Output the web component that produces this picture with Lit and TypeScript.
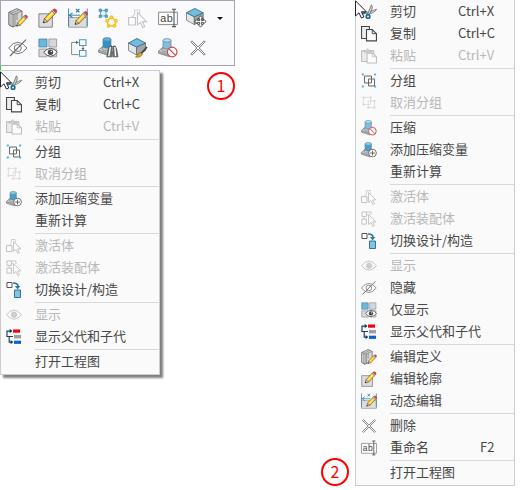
import { LitElement, html, svg, css, nothing, TemplateResult, SVGTemplateResult } from "lit";
import { customElement, property } from "lit/decorators.js";
import { classMap } from "lit/directives/class-map.js";

const pencil = (x: number, y: number, w: number) => svg`
  <g transform="translate(${x} ${y}) scale(${w / 12})">
    <path d="M0 13 L1.2 9 L4 12 Z" fill="#f3dfb8" stroke="#444" stroke-width=".7"/>
    <path d="M0 13 L.5 11.2 L1.7 12.5 Z" fill="#222"/>
    <path d="M1.2 9 L8 1.8 L10.8 4.8 L4 12 Z" fill="#fdcb30" stroke="#6b5216" stroke-width=".7"/>
    <path d="M2.6 10.2 L9 3.4" stroke="#ffee9a" stroke-width="1.2"/>
    <path d="M8 1.8 L9 .8 L11.9 3.7 L10.8 4.8 Z" fill="#ccc" stroke="#555" stroke-width=".5"/>
    <path d="M9 .8 Q10.6 -.6 12 .8 Q13.3 2.3 11.9 3.7 Z" fill="#e23f3f" stroke="#8d2a2a" stroke-width=".5"/>
  </g>`;

const cube = svg`
  <path d="M0 4.5 L8 8.5 V16.5 L0 12 Z" fill="#e4e5e7" stroke="#808184" stroke-width=".9"/>
  <path d="M17 4.5 L8 8.5 V16.5 L17 12 Z" fill="#a3a5a8" stroke="#6c6d70" stroke-width=".9"/>
  <path d="M8.5 0 L17 4.5 L8 8.5 L0 4.5 Z" fill="#74bbdd" stroke="#33718f" stroke-width=".9"/>`;

const stud = (side: string, top: string) => svg`
  <path d="M.5 13.2 L5 9.2 H14 L18.5 12.5 V14 L11 18.6 L.5 15.2 Z" fill="#a9abae" stroke="#7b7c7f" stroke-width=".8"/>
  <path d="M.5 13.2 L5 9.2 H14 L18.5 12.5 L11 16.6 Z" fill="#d6d7d9" stroke="#858689" stroke-width=".7"/>
  <ellipse cx="9" cy="11.4" rx="5.2" ry="2.6" fill="#bfc1c3" stroke="#77787b" stroke-width=".7"/>
  <path d="M5 2.4 V10 Q9 12.4 13 10 V2.4 Z" fill=${side} stroke="#4c88a8" stroke-width=".7"/>
  <ellipse cx="9" cy="2.4" rx="4" ry="1.8" fill=${top} stroke="#4c88a8" stroke-width=".7"/>`;

const pointer = svg`
  <path d="M9.5 4.5 V16.8 L12.4 14.4 L14.8 19.5 L16.8 18.5 L14.5 13.6 H18.6 Z" fill="#fff" stroke="#777" stroke-width="1.1"/>`;

const ban = svg`
  <circle cx="14.2" cy="14" r="4.8" fill="#fff" stroke="#cf4b4b" stroke-width="1.2"/>
  <path d="M10.9 10.6 L17.6 17.4" stroke="#cf4b4b" stroke-width="1.2"/>`;

const ICONS: Record<string, SVGTemplateResult> = {
  cut: svg`
    <path d="M2 11 Q9 11 19.5 6.6 Q17 11 9 12.6 Z" fill="#dfe0e2" stroke="#5c5e60" stroke-width=".9"/>
    <path d="M7.5 14.5 L13 1 Q15.4 3.5 13.2 7.5 L10 14.5 Z" fill="#d3d6d8" stroke="#5c5e60" stroke-width=".9"/>
    <circle cx="8.8" cy="15.6" r="2.3" fill="#cfe8f3" stroke="#1f6c8e" stroke-width="2"/>
    <circle cx="3" cy="10.4" r="1.9" fill="none" stroke="#1f6c8e" stroke-width="1.6"/>`,
  copy: svg`
    <path d="M.7 .7 H10.5 V15.6 H.7 Z" fill="#eceded" stroke="#444" stroke-width="1.3"/>
    <path d="M6.9 4.4 H14 L19.3 9.6 V18.6 H6.9 Z" fill="#fff" stroke="#444" stroke-width="1.4"/>
    <path d="M14 4.4 V9.6 H19.3" fill="none" stroke="#444" stroke-width="1.2"/>`,
  paste: svg`
    <path d="M.7 3.6 H16 V17 H.7 Z" fill="#d9d9d9" stroke="#777" stroke-width="1.3"/>
    <path d="M3.8 5 V3.2 H6 Q8.3 -1 10.6 3.2 H12.8 V5 Z" fill="#aaa" stroke="#666"/>
    <path d="M7.6 6.4 H14 L19.3 11 V18.8 H7.6 Z" fill="#fff" stroke="#777" stroke-width="1.3"/>
    <path d="M14 6.4 V11 H19.3" fill="none" stroke="#777"/>`,
  group: svg`
    <path d="M4.4 3.8 H13.1 V12.4 H4.4 Z" fill="#fff" stroke="#666" stroke-width="1.25"/>
    <path d="M9.4 7.5 H16.9 V16.2 H9.4 Z" fill="none" stroke="#666" stroke-width="1.25"/>
    <path d="M1 .6 h2.5 v2.5 h-2.5 Z M16.4 .6 h2.5 v2.5 h-2.5 Z M1 15.6 h2.5 v2.5 h-2.5 Z M16.4 15.6 h2.5 v2.5 h-2.5 Z" fill="#54b2dc"/>`,
  ungroup: svg`
    <path d="M3 3 H12 V12 H3 Z M9 7.5 H16.9 V15.6 H9 Z" fill="none" stroke="#bbb" stroke-width="1.25"/>
    <path d="M1.8 1.8 h2.5 v2.5 h-2.5 Z M11 1.8 h2.5 v2.5 h-2.5 Z M1.8 11 h2.5 v2.5 h-2.5 Z M15.6 6.2 h2.5 v2.5 h-2.5 Z M15.6 14.6 h2.5 v2.5 h-2.5 Z M7.8 14.6 h2.5 v2.5 h-2.5 Z" fill="#b5b5b5"/>`,
  suppress: svg`${stud("#85bddb", "#b4dcf0")}${ban}`,
  addvar: svg`${stud("#4d9dc6", "#8ecbe7")}
    <circle cx="14.4" cy="13.8" r="4.8" fill="#fff" stroke="#555"/>
    <path d="M11.4 13.8 H17.4 M14.4 10.8 V16.8" stroke="#555" stroke-width="1.1"/>`,
  body: svg`
    <path d="M.6 9.5 H7.5 V17 H.6 Z" fill="#fff" stroke="#777" stroke-width="1.2"/>
    <path d="M7.6 2 H11.6 V6 M6.6 6.6 V2 H11 M3.6 9.5 L6.6 6.6" fill="none" stroke="#999" stroke-width="1.1"/>${pointer}`,
  assembly: svg`
    <path d="M1.2 1.2 H6.8 V6.8 H1.2 Z M1.2 10 H6.8 V16.4 H1.2 Z" fill="#fff" stroke="#777" stroke-width="1.2"/>
    <path d="M6.8 1.2 H12.4 V5" fill="none" stroke="#888" stroke-width="1.2"/>
    <path d="M6.8 4.4 H9.4 M4 6.8 V10" stroke="#888"/>${pointer}`,
  swap: svg`
    <path d="M1.2 .6 H7.5 V6.9 H1.2 Z" fill="#fff" stroke="#555" stroke-width="1.25"/>
    <path d="M8.8 1.2 Q15.4 1.4 15 6" fill="none" stroke="#2f7698" stroke-width="2"/>
    <path d="M11 5 L14.6 9 L18 5 Z" fill="#2f7698"/>
    <path d="M10.6 10 H18.1 V19.4 H10.6 Z" fill="#83c3e2" stroke="#2f7698" stroke-width="1.25"/>`,
  show: svg`
    <path d="M.6 9.6 Q10 -1.8 19.4 9.6 Q10 21 .6 9.6 Z" fill="#fff" stroke="#777" stroke-width="1.1"/>
    <circle cx="10" cy="9.6" r="3.4" fill="#999" stroke="#888"/>`,
  hide: svg`
    <path d="M.6 10 Q9.8 -1.5 19 10 Q9.8 21.5 .6 10 Z" fill="#fff" stroke="#777"/>
    <circle cx="9.8" cy="10" r="3.5" fill="#fff" stroke="#777"/>
    <path d="M2 18 L18 1.6" stroke="#666" stroke-width="1.1"/>`,
  only: svg`
    <path d="M.9 1 H9 V9 H.9 Z" fill="#6bb7dc" stroke="#4388aa" stroke-width=".8"/>
    <path d="M10.9 1 H18.6 V9 H10.9 Z M.9 11 H9 V18.8 H.9 Z M10.9 11 H18.6 V18.8 H10.9 Z" fill="#d7d8db" stroke="#8d8f94" stroke-width=".8"/>
    <path d="M5.6 14.3 Q12.5 6.4 19.4 14.3 Q12.5 22.2 5.6 14.3 Z" fill="#fff" stroke="#555"/>
    <circle cx="12.5" cy="14.3" r="2.7" fill="#444"/><circle cx="13.3" cy="13.5" r=".8" fill="#fff"/>`,
  parents: svg`
    <path d="M8.8 .6 H17.6 V4.6 H8.8 Z" fill="#f00010"/>
    <path d="M10 7.4 H18.8 V11.8 H10 Z" fill="#a0a0a0"/>
    <path d="M10 14.6 H18.8 V18.6 H10 Z" fill="#0862cf"/>
    <path d="M7 2.6 H1.2 V9.4 H8.8 M4 9.4 V16.4 H7.5" fill="none" stroke="#1c3a60" stroke-width="1.4"/>
    <path d="M4.6 -.2 L8 2.6 L4.6 5.4 Z M5.8 13.6 L9.2 16.4 L5.8 19.2 Z" fill="#1c3a60"/>`,
  definition: svg`
    <path d="M1 4.2 L8.8 .6 L14 3 V14.5 L5 19 L1 16.8 Z" fill="#d5d6d8" stroke="#666" stroke-width=".9"/>
    <path d="M1 4.2 L5 6.6 V19 L1 16.8 Z" fill="#f0f0f1" stroke="#666" stroke-width=".9"/>
    <path d="M5 6.6 L14 3 M3 5.4 L11.2 1.8 M3 5.4 V17.8 M7 5.8 V18 M9 5 V12" fill="none" stroke="#777" stroke-width=".8"/>
    ${pencil(8.6, 7, 10.4)}`,
  profile: svg`
    <path d="M.9 5.8 H14.4 V19.2 H.9 Z" fill="#dcdddf" stroke="#888"/>${pencil(5.2, .8, 13)}`,
  dynamic: svg`
    <path d="M.6 9.5 H19.2 V19.2 H.6 Z" fill="#dcdddf" stroke="#999" stroke-width=".9"/>
    <path d="M.6 .5 V18 M19.2 .5 V18 M1 7.2 H12" stroke="#3d87ac"/>
    <path d="M4.5 4.8 L1.6 7.2 L4.5 9.6 M8 1 L11.4 4.4 M11.4 1 L8 4.4" fill="none" stroke="#2c7ba2" stroke-width="1.1"/>
    ${pencil(7, 3.5, 12)}`,
  pattern: svg`
    <path d="M2.5 2.5 H8 V8 H2.5 Z" fill="#e6f3fa" stroke="#5aa7cc" stroke-width=".9"/>
    <path d="M1 1 h2.6 v2.6 h-2.6 Z M7 1 h2.6 v2.6 h-2.6 Z M1 7 h2.6 v2.6 h-2.6 Z M7 7 h2.6 v2.6 h-2.6 Z" fill="#57abd3" stroke="#2f7fa6" stroke-width=".5"/>
    <path d="M13.5 9.2 L18 12.8 L16.4 17.9 H10.6 L9 12.8 Z" fill="#fffbe8" stroke="#f0b60c" stroke-width="1.1"/>
    <g fill="#ffd02a" stroke="#dca407" stroke-width=".5"><circle cx="13.5" cy="9.2" r="1.6"/><circle cx="17.9" cy="12.8" r="1.6"/><circle cx="16.5" cy="17.8" r="1.6"/><circle cx="10.5" cy="17.8" r="1.6"/><circle cx="9.1" cy="12.8" r="1.6"/></g>`,
  rename: svg`
    <path d="M.6 4.2 H19.4 V16.6 H.6 Z" fill="#fff" stroke="#888"/>
    <text x="2" y="14.2" font-family="Liberation Mono, monospace" font-size="11" fill="#444">ab</text>
    <path d="M14 1.2 H18 M16 1.2 V18.6 M14 18.6 H18" fill="none" stroke="#555" stroke-width="1.1"/>`,
  move: svg`<g transform="translate(-1.5 .4) scale(.98)">${cube}</g>
    <path d="M12.5 7.8 L15 10.6 H13.4 V12.6 H15.4 V11 L18.2 13.5 L15.4 16 V14.4 H13.4 V16.4 H15 L12.5 19.2 L10 16.4 H11.6 V14.4 H9.6 V16 L6.8 13.5 L9.6 11 V12.6 H11.6 V10.6 H10 Z" fill="#fff" stroke="#444" stroke-width=".9"/>`,
  tree: svg`
    <path d="M10.5 4.4 H3.6 V16.6 H10.5 M15 8 V12" fill="none" stroke="#888"/>
    <path d="M8 2.6 L10.6 4.4 L8 6.2 Z M13.4 10 L15 12 L16.6 10 Z" fill="#666"/>
    <path d="M11.5 1.8 H18 V7.5 H11.5 Z M11.5 12.5 H18 V18.2 H11.5 Z" fill="#fff" stroke="#4f9bbf" stroke-width="1.1"/>`,
  find: svg`<g transform="translate(0 -1)">${stud("#3590c0", "#5db0d8")}</g>
    <path d="M10.4 11 L12 8 H13.8 L14.2 18.8 H8.8 Z M18.6 11 L17.2 8 H15.4 L15 18.8 H20 Z" fill="#77797c" stroke="#505153" stroke-width=".8"/>
    <path d="M12.4 9 L10.8 18 M16.8 9 L17.6 18" stroke="#fff" stroke-width="1.3"/>`,
  paint: svg`<g transform="translate(.5 .5)">${cube}</g>
    <path d="M19 9 L13.4 15.4" stroke="#444" stroke-width="1.8"/>
    <path d="M12.3 14.3 L14.4 16.2 Q12.5 20 7.5 19 Q10.4 17.6 12.3 14.3 Z" fill="#e0aa25" stroke="#8a6613" stroke-width=".7"/>`,
  remove: svg`
    <path d="M3.2 2 L10 8.8 L16.8 2 L18 3.2 L11.2 10 L18 16.8 L16.8 18 L10 11.2 L3.2 18 L2 16.8 L8.8 10 L2 3.2 Z" fill="#fff" stroke="#6b6b6b"/>`,
};

const icon = (name: string, size: number) => svg`
  <svg width=${size} height=${size} viewBox="0 0 20 20" aria-hidden="true">${ICONS[name] ?? nothing}</svg>`;

const cursor = html`<svg class="cursor" width="13" height="19" viewBox="0 0 13 19" aria-hidden="true">
  <path d="M.5 .8 V16 L4 12.8 L6.4 18 L8.8 17 L6.5 11.8 H11.4 Z" fill="#fff" stroke="#222230"/></svg>`;

interface Entry { label: string; icon?: string; key?: string; off?: boolean }

const clipboard: Entry[] = [
  { label: "剪切", icon: "cut", key: "Ctrl+X" },
  { label: "复制", icon: "copy", key: "Ctrl+C" },
  { label: "粘贴", icon: "paste", key: "Ctrl+V", off: true },
];
const grouping: Entry[] = [
  { label: "分组", icon: "group" },
  { label: "取消分组", icon: "ungroup", off: true },
];
const variables: Entry[] = [
  { label: "添加压缩变量", icon: "addvar" },
  { label: "重新计算" },
];
const activation: Entry[] = [
  { label: "激活体", icon: "body", off: true },
  { label: "激活装配体", icon: "assembly", off: true },
  { label: "切换设计/构造", icon: "swap" },
];
const show: Entry = { label: "显示", icon: "show", off: true };
const parents: Entry = { label: "显示父代和子代", icon: "parents" };
const drawing: Entry[] = [{ label: "打开工程图" }];

const shortMenu: Entry[][] = [clipboard, grouping, variables, activation, [show, parents], drawing];
const fullMenu: Entry[][] = [
  clipboard,
  grouping,
  [{ label: "压缩", icon: "suppress" }, ...variables],
  activation,
  [show, { label: "隐藏", icon: "hide" }, { label: "仅显示", icon: "only" }, parents],
  [
    { label: "编辑定义", icon: "definition" },
    { label: "编辑轮廓", icon: "profile" },
    { label: "动态编辑", icon: "dynamic" },
  ],
  [{ label: "删除", icon: "remove" }, { label: "重命名", icon: "rename", key: "F2" }],
  drawing,
];

const tools: [string, string][][] = [
  [["definition", "编辑定义"], ["profile", "编辑轮廓"], ["dynamic", "动态编辑"], ["pattern", "阵列"],
   ["body", "激活体"], ["rename", "重命名"], ["move", "移动"]],
  [["hide", "隐藏"], ["only", "仅显示"], ["tree", "父代和子代"], ["find", "查找"],
   ["paint", "外观"], ["suppress", "压缩"], ["remove", "删除"]],
];

@customElement("context-menu")
class ContextMenu extends LitElement {
  @property({ attribute: false }) groups: Entry[][] = [];
  @property({ type: Boolean, reflect: true }) raised = false;
  @property({ type: Boolean, reflect: true }) clipped = false;

  static styles = css`
    :host { display: block; position: relative; box-sizing: border-box; width: 160px; flex: none;
      padding-bottom: 2px; border: 1px solid #cdcdd0; background: #fafafb; }
    :host([raised]) { box-shadow: 3px 3px 2px #808080; }
    :host([clipped]) { border-top: none; }
    .item { display: grid; grid-template-columns: 16px 68px 1fr; align-items: center;
      width: 100%; height: 22px; padding: 0 0 0 5px; border: 0; background: none; color: #484848;
      font: 13px/20px "Noto Sans CJK SC", sans-serif; text-align: left; white-space: nowrap; }
    .item:disabled { color: #b8b8b8; }
    .item:disabled svg { filter: grayscale(1); opacity: 0.45; }
    .item svg { display: block; overflow: visible; padding-top: 2px; }
    .label { grid-column: 2; padding-left: 13px; }
    .key { grid-column: 3; padding-left: 13px; }
    .key.short { padding-left: 35px; }
    hr { height: 1px; margin: 2px 0 0 34px; border: 0; background: #d9d9db; }
    .cursor { position: absolute; left: -1px; top: 0; }
  `;

  private item(e: Entry): TemplateResult {
    return html`<button class="item" role="menuitem" ?disabled=${!!e.off}>
      ${e.icon ? icon(e.icon, 16) : nothing}
      <span class="label">${e.label}</span>
      ${e.key ? html`<span class=${classMap({ key: true, short: e.key.length < 4 })}>${e.key}</span>` : nothing}
    </button>`;
  }

  render() {
    return html`<div role="menu">
      ${this.groups.map((g, i) => html`${i ? html`<hr>` : nothing}${g.map((e) => this.item(e))}`)}
    </div>${cursor}`;
  }
}

@customElement("quick-bar")
class QuickBar extends LitElement {
  static styles = css`
    :host { display: block; box-sizing: border-box; padding: 2px; border: 1px solid #a5a5b4; background: #fafafd; }
    .row { display: flex; }
    button { display: flex; align-items: center; justify-content: center; width: 30px; height: 30px;
      padding: 0; border: 0; background: none; }
    button:disabled svg { filter: grayscale(1); opacity: 0.4; }
    .more { width: 14px; }
    svg { overflow: visible; }
  `;

  render() {
    return html`<div role="toolbar">${tools.map((row, i) => html`<div class="row">
      ${row.map(([name, label]) => html`<button aria-label=${label} ?disabled=${name === "body"}>${icon(name, name === "remove" ? 18 : 20)}</button>`)}
      ${i === 0 ? html`<button class="more" aria-label="更多"><svg width="6" height="3" viewBox="0 0 6 3"><path d="M0 0 H6 L3 3 Z" fill="#111"/></svg></button>` : nothing}
    </div>`)}</div>`;
  }
}

@customElement("app-root")
class AppRoot extends LitElement {
  static styles = css`
    :host { display: block; min-height: 100vh; background: #fff; }
    .page { display: flex; justify-content: space-between; align-items: flex-start; padding-right: 7px; }
    .compact { width: 235px; }
    .below { display: flex; justify-content: space-between; align-items: flex-start; padding-top: 4px; position: relative; }
    .anchor { position: absolute; left: 0; top: 0; width: 1px; height: 4px; background: #00ee22; }
    .full { display: flex; align-items: flex-end; gap: 6px; }
    .mark { box-sizing: border-box; width: 28px; height: 28px; border: 2px solid #f00; border-radius: 50%;
      color: #f00; font: 16px/23px "Noto Sans CJK SC", sans-serif; text-align: center; }
    .below .mark { margin-top: 2px; }
  `;

  render() {
    return html`<main class="page">
      <section class="compact">
        <quick-bar></quick-bar>
        <div class="below">
          <span class="anchor"></span>
          <context-menu raised .groups=${shortMenu}></context-menu>
          <span class="mark">1</span>
        </div>
      </section>
      <section class="full">
        <span class="mark">2</span>
        <context-menu clipped .groups=${fullMenu}></context-menu>
      </section>
    </main>`;
  }
}
